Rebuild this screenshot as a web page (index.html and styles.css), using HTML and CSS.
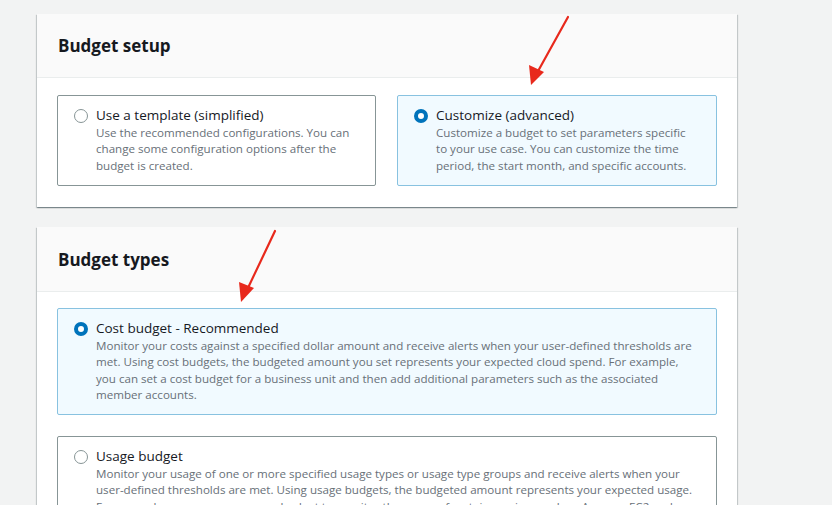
FILE: index.html
```html
<!DOCTYPE html>
<html>
<head>
<meta charset="utf-8">
<link rel="stylesheet" href="styles.css">
</head>
<body>
<div class="page">
  <section class="card card-setup">
    <div class="card-header"><h2>Budget setup</h2></div>
    <div class="card-body grid2">
      <div class="option">
        <span class="radio"></span>
        <div class="option-text">
          <div class="label">Use a template (simplified)</div>
          <div class="desc">Use the recommended configurations. You can change some configuration options after the budget is created.</div>
        </div>
      </div>
      <div class="option selected">
        <span class="radio checked"></span>
        <div class="option-text">
          <div class="label">Customize (advanced)</div>
          <div class="desc">Customize a budget to set parameters specific to your use case. You can customize the time period, the start month, and specific accounts.</div>
        </div>
      </div>
    </div>
  </section>

  <section class="card card-types">
    <div class="card-header"><h2>Budget types</h2></div>
    <div class="card-body stack">
      <div class="option selected tall">
        <span class="radio checked"></span>
        <div class="option-text">
          <div class="label">Cost budget - Recommended</div>
          <div class="desc">Monitor your costs against a specified dollar amount and receive alerts when your user-defined thresholds are met. Using cost budgets, the budgeted amount you set represents your expected cloud spend. For example, you can set a cost budget for a business unit and then add additional parameters such as the associated member accounts.</div>
        </div>
      </div>
      <div class="option tall">
        <span class="radio"></span>
        <div class="option-text">
          <div class="label">Usage budget</div>
          <div class="desc">Monitor your usage of one or more specified usage types or usage type groups and receive alerts when your user-defined thresholds are met. Using usage budgets, the budgeted amount represents your expected usage. For example, you can use a usage budget to monitor the usage of certain services such as Amazon EC2 and Amazon S3.</div>
        </div>
      </div>
    </div>
  </section>
</div>

<svg class="arrows" width="832" height="505" viewBox="0 0 832 505">
  <g stroke="#e8291c" stroke-width="2.2" stroke-linecap="round" fill="none">
    <line x1="568" y1="17" x2="537" y2="73"/>
    <line x1="275" y1="231" x2="247" y2="290"/>
  </g>
  <g fill="#e8291c">
    <polygon points="531,85 529,65 544,72"/>
    <polygon points="241,302 239,282 254,288"/>
  </g>
</svg>
</body>
</html>
```

FILE: styles.css
```css
* { box-sizing: border-box; }
html, body { margin: 0; padding: 0; }
body {
  background: #f2f3f3;
  font-family: "Open Sans", "Noto Sans", sans-serif;
  color: #16191f;
  width: 832px;
  height: 505px;
  overflow: hidden;
  position: relative;
}
.page {
  padding: 14px 0 0 37px;
  display: flex;
  flex-direction: column;
  gap: 20px;
}
.card {
  width: 700px;
  background: #fff;
  box-shadow: 0 1px 1px 0 rgba(0, 28, 36, 0.3), 1px 1px 1px 0 rgba(0, 28, 36, 0.15), -1px 1px 1px 0 rgba(0, 28, 36, 0.15);
}
.card-header {
  background: #fafafa;
  border-bottom: 1px solid #eaeded;
  height: 64px;
  padding: 0 21px;
  display: flex;
  align-items: center;
}
.card-types .card-header { height: 65px; }
.card-header h2 {
  margin: 0;
  font-size: 17px;
  font-weight: 700;
  color: #16191f;
}
.card-body {
  padding: 17px 20px 21px 20px;
}
.card-types .card-body { padding-top: 16px; }
.grid2 {
  display: grid;
  grid-template-columns: 319px 320px;
  gap: 21px;
}
.stack {
  display: flex;
  flex-direction: column;
  gap: 21px;
}
.option {
  border: 1px solid #879596;
  border-radius: 2px;
  background: #fff;
  height: 91px;
  padding: 9px 20px 0 16px;
  display: flex;
  gap: 8px;
  align-items: flex-start;
}
.option.tall { height: 107px; }
.option.selected {
  border-color: #88c2e0;
  background: #f1faff;
}
.radio {
  flex: none;
  width: 14px;
  height: 14px;
  border-radius: 50%;
  border: 1.5px solid #879596;
  background: #fff;
  margin-top: 4px;
}
.radio.checked {
  border: 4px solid #0073bb;
}
.label {
  font-size: 13.5px;
  line-height: 20px;
  color: #16191f;
}
.desc {
  font-size: 11.6px;
  line-height: 16.3px;
  color: #687078;
}
.arrows {
  position: absolute;
  left: 0;
  top: 0;
  pointer-events: none;
}
```
